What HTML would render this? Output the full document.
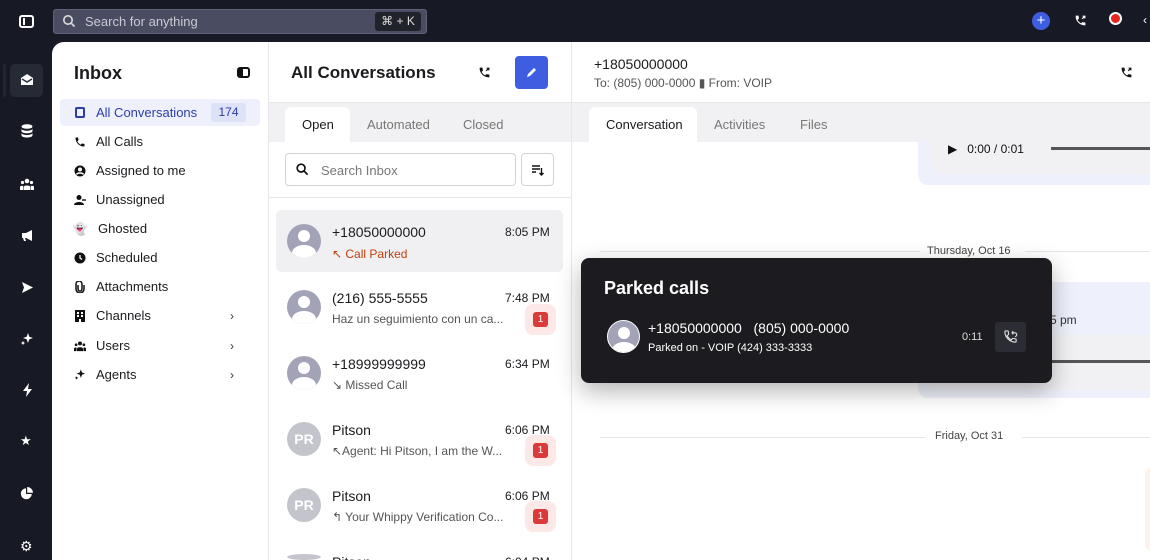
<!DOCTYPE html>
<html><head><meta charset="utf-8"><style>
*{box-sizing:border-box;margin:0;padding:0}
html{width:1150px;height:560px;overflow:hidden}
body{width:1150px;height:560px;overflow:hidden;background:#171a24;font-family:"Liberation Sans",sans-serif;position:relative;color:#1b1b1f}
.a{position:absolute}
svg{display:block}
.nav{position:absolute;left:74px;font-size:13px;color:#1b1b1f;display:flex;align-items:center}
.nav .ic{width:12px;height:12px;margin-right:10px;display:flex;align-items:center;justify-content:center}
.chev{position:absolute;left:230px;font-size:12px;color:#333}
.av{position:absolute;left:287px;width:34px;height:34px;border-radius:50%;background:#a3a3b8;overflow:hidden}
.av.pr{background:#c4c4cc;color:#fff;font-weight:bold;font-size:14px;text-align:center;line-height:34px}
.nm{position:absolute;left:332px;font-size:14px;color:#1b1b1f}
.tm{position:absolute;left:505px;font-size:12px;color:#1b1b1f}
.sb{position:absolute;left:332px;font-size:12px;color:#555}
.bd{position:absolute;left:525px;width:31px;height:31px;border-radius:8px;background:#fde8e8}
.bd span{position:absolute;left:8px;top:8px;width:15px;height:15px;border-radius:3px;background:#d93a3a;color:#fff;font-size:10px;text-align:center;line-height:15px}
</style></head><body>
<!-- top bar -->
<div class="a" style="left:19px;top:15px;width:15px;height:13px;border:2px solid #fff;border-radius:3px"><div style="position:absolute;left:2px;top:1px;width:2px;height:7px;background:#fff"></div></div>
<div class="a" style="left:53px;top:9px;width:374px;height:25px;background:#4a4c62;border:1px solid #5e6178;border-radius:3px"></div>
<svg class="a" style="left:62px;top:14px" width="14" height="14" viewBox="0 0 14 14"><circle cx="6" cy="6" r="4.2" fill="none" stroke="#ddd" stroke-width="1.6"/><path d="M9 9l3.5 3.5" stroke="#ddd" stroke-width="1.6"/></svg>
<div class="a" style="left:85px;top:14px;font-size:13px;color:#c9cad4">Search for anything</div>
<div class="a" style="left:375px;top:12px;width:46px;height:19px;background:#20222c;border-radius:3px;color:#ddd;font-size:12px;line-height:19px;text-align:center">⌘ + K</div>
<div class="a" style="left:1032px;top:12px;width:18px;height:18px;border-radius:50%;background:#3f5de0;color:#fff;font-size:15px;line-height:17px;text-align:center">+</div>
<svg class="a" style="left:1074px;top:14px" width="13" height="13" viewBox="0 0 24 24"><path d="M6.6 10.8c1.4 2.8 3.8 5.1 6.6 6.6l2.2-2.2c.3-.3.7-.4 1-.2 1.1.4 2.3.6 3.6.6.6 0 1 .4 1 1V20c0 .6-.4 1-1 1C10.6 21 3 13.4 3 4c0-.6.4-1 1-1h3.5c.6 0 1 .4 1 1 0 1.3.2 2.5.6 3.6.1.3 0 .7-.2 1z" fill="#fff"/><path d="M15 9l5-5M16 4h4v4" stroke="#fff" stroke-width="2.2" fill="none"/></svg>
<div class="a" style="left:1109px;top:12px;width:13px;height:13px;border-radius:50%;background:#e8261c;border:2px solid #fff"></div>
<div class="a" style="left:1143px;top:13px;color:#fff;font-size:12px">‹</div>
<!-- rail -->
<div class="a" style="left:3px;top:64px;width:3px;height:33px;background:#23262f;border-radius:2px"></div>
<div class="a" style="left:10px;top:64px;width:33px;height:33px;background:#262a35;border-radius:5px"></div>
<svg class="a" style="left:20px;top:74px" width="14" height="12" viewBox="0 0 14 12"><path d="M1 4L7 0l6 4v7H1z" fill="#fff"/><path d="M2 5l5 3 5-3" stroke="#262a35" stroke-width="1.4" fill="none"/></svg>
<svg class="a" style="left:21px;top:124px" width="12" height="14" viewBox="0 0 12 14"><ellipse cx="6" cy="2.5" rx="5.5" ry="2.3" fill="#fff"/><path d="M.5 4.5c0 3 11 3 11 0v2.5c0 3-11 3-11 0zM.5 8.8c0 3 11 3 11 0v2.5c0 3-11 3-11 0z" fill="#fff"/></svg>
<svg class="a" style="left:20px;top:178px" width="14" height="12" viewBox="0 0 14 12"><circle cx="7" cy="3" r="2.3" fill="#fff"/><circle cx="2.5" cy="4.5" r="1.6" fill="#fff"/><circle cx="11.5" cy="4.5" r="1.6" fill="#fff"/><path d="M3.5 12v-3c0-2 7-2 7 0v3zM0 12V9c0-1.5 2.5-1.5 3-1v4zM14 12V9c0-1.5-2.5-1.5-3-1v4z" fill="#fff"/></svg>
<svg class="a" style="left:21px;top:229px" width="13" height="13" viewBox="0 0 13 13"><path d="M1 4h4l6-3v11l-6-3H4l1 3H3L2 9H1z" fill="#fff"/></svg>
<svg class="a" style="left:21px;top:281px" width="13" height="13" viewBox="0 0 13 13"><path d="M1 1l11 5.5L1 12l2-5.5z" fill="#fff"/></svg>
<svg class="a" style="left:20px;top:332px" width="14" height="14" viewBox="0 0 14 14"><path d="M8 1l1.3 3.7L13 6l-3.7 1.3L8 11 6.7 7.3 3 6l3.7-1.3zM3 9l.7 1.3L5 11l-1.3.7L3 13l-.7-1.3L1 11l1.3-.7z" fill="#fff"/></svg>
<svg class="a" style="left:22px;top:383px" width="11" height="14" viewBox="0 0 11 14"><path d="M7 0L1 8h4l-1 6 6-8H6z" fill="#fff"/></svg>
<div class="a" style="left:20px;top:433px;color:#fff;font-size:13px">★</div>
<svg class="a" style="left:20px;top:487px" width="13" height="13" viewBox="0 0 13 13"><path d="M6 1.2A5.5 5.5 0 1 0 11.8 7H6z" fill="#fff"/><path d="M7.2 0v5.8H13A6 6 0 0 0 7.2 0z" fill="#fff"/></svg>
<div class="a" style="left:20px;top:538px;color:#fff;font-size:14px">⚙</div>
<!-- main panel -->
<div class="a" style="left:52px;top:42px;width:1098px;height:518px;background:#fff;border-radius:12px 0 0 0;overflow:hidden">
</div>
<div class="a" style="left:268px;top:42px;width:1px;height:518px;background:#e5e5ea"></div>
<div class="a" style="left:571px;top:42px;width:1px;height:518px;background:#e5e5ea"></div>
<!-- inbox sidebar -->
<div class="a" style="left:74px;top:63px;font-size:18px;font-weight:bold">Inbox</div>
<div class="a" style="left:237px;top:67px;width:13px;height:11px;border:2px solid #111;border-radius:3px"><div style="width:4px;height:7px;background:#111"></div></div>
<div class="a" style="left:60px;top:99px;width:200px;height:27px;background:#eef0fb;border-radius:4px"></div>
<div class="a" style="left:211px;top:103px;width:35px;height:19px;background:#dde2f8;border-radius:3px;color:#2c3e9c;font-size:12px;line-height:19px;text-align:center">174</div>
<div class="nav" style="top:105px;color:#2c3ea8"><span class="ic"><span style="width:10px;height:11px;border:2px solid #2c3ea8;border-radius:2px"></span></span>All Conversations</div>
<div class="nav" style="top:134px"><span class="ic"><svg width="12" height="12" viewBox="0 0 24 24"><path d="M6.6 10.8c1.4 2.8 3.8 5.1 6.6 6.6l2.2-2.2c.3-.3.7-.4 1-.2 1.1.4 2.3.6 3.6.6.6 0 1 .4 1 1V20c0 .6-.4 1-1 1C10.6 21 3 13.4 3 4c0-.6.4-1 1-1h3.5c.6 0 1 .4 1 1 0 1.3.2 2.5.6 3.6.1.3 0 .7-.2 1z" fill="#111"/></svg></span>All Calls</div>
<div class="nav" style="top:163px"><span class="ic"><svg width="12" height="12" viewBox="0 0 12 12"><circle cx="6" cy="6" r="5.5" fill="#111"/><circle cx="6" cy="4.5" r="2" fill="#fff"/><path d="M2.5 9.5c1-2 6-2 7 0" stroke="#fff" stroke-width="1.4" fill="none"/></svg></span>Assigned to me</div>
<div class="nav" style="top:192px"><span class="ic"><svg width="12" height="12" viewBox="0 0 12 12"><circle cx="5" cy="3.5" r="2.5" fill="#111"/><path d="M0 11c0-4 10-4 10 0z" fill="#111"/><path d="M8 6h4" stroke="#111" stroke-width="1.4"/></svg></span>Unassigned</div>
<div class="nav" style="top:221px"><span class="ic" style="font-size:12px;margin-right:12px">👻</span>Ghosted</div>
<div class="nav" style="top:250px"><span class="ic"><svg width="12" height="12" viewBox="0 0 12 12"><circle cx="6" cy="6" r="5.5" fill="#111"/><path d="M6 3v3l2 1.5" stroke="#fff" stroke-width="1.3" fill="none"/></svg></span>Scheduled</div>
<div class="nav" style="top:279px"><span class="ic"><svg width="10" height="12" viewBox="0 0 10 12"><path d="M3 4v4a2 2 0 0 0 4 0V3a3 3 0 0 0-6 0v5a4 4 0 0 0 8 0V4" stroke="#111" stroke-width="1.5" fill="none"/></svg></span>Attachments</div>
<div class="nav" style="top:308px"><span class="ic"><svg width="10" height="12" viewBox="0 0 10 12"><path d="M0 0h10v12H6V9H4v3H0z" fill="#111"/><rect x="2" y="2" width="2" height="2" fill="#fff"/><rect x="6" y="2" width="2" height="2" fill="#fff"/><rect x="2" y="5" width="2" height="2" fill="#fff"/><rect x="6" y="5" width="2" height="2" fill="#fff"/></svg></span>Channels</div><div class="chev" style="top:309px">›</div>
<div class="nav" style="top:338px"><span class="ic"><svg width="14" height="12" viewBox="0 0 14 12"><circle cx="7" cy="3" r="2.3" fill="#111"/><circle cx="2.5" cy="4.5" r="1.6" fill="#111"/><circle cx="11.5" cy="4.5" r="1.6" fill="#111"/><path d="M3.5 12v-3c0-2 7-2 7 0v3zM0 12V9c0-1.5 2.5-1.5 3-1v4zM14 12V9c0-1.5-2.5-1.5-3-1v4z" fill="#111"/></svg></span>Users</div><div class="chev" style="top:339px">›</div>
<div class="nav" style="top:367px"><span class="ic"><svg width="13" height="13" viewBox="0 0 14 14"><path d="M8 1l1.3 3.7L13 6l-3.7 1.3L8 11 6.7 7.3 3 6l3.7-1.3zM3 9l.7 1.3L5 11l-1.3.7L3 13l-.7-1.3L1 11l1.3-.7z" fill="#111"/></svg></span>Agents</div><div class="chev" style="top:368px">›</div>
<!-- conversations column -->
<div class="a" style="left:291px;top:63px;font-size:17px;font-weight:bold">All Conversations</div>
<svg class="a" style="left:478px;top:66px" width="13" height="13" viewBox="0 0 24 24"><path d="M6.6 10.8c1.4 2.8 3.8 5.1 6.6 6.6l2.2-2.2c.3-.3.7-.4 1-.2 1.1.4 2.3.6 3.6.6.6 0 1 .4 1 1V20c0 .6-.4 1-1 1C10.6 21 3 13.4 3 4c0-.6.4-1 1-1h3.5c.6 0 1 .4 1 1 0 1.3.2 2.5.6 3.6.1.3 0 .7-.2 1z" fill="#111"/><path d="M15 9l5-5M16 4h4v4" stroke="#111" stroke-width="2.2" fill="none"/></svg>
<div class="a" style="left:515px;top:56px;width:33px;height:33px;background:#3f5de0;border-radius:4px"><svg style="margin:10px" width="13" height="13" viewBox="0 0 13 13"><path d="M2 11l1-3 6-6 2 2-6 6z" fill="#fff"/></svg></div>
<div class="a" style="left:269px;top:102px;width:302px;height:40px;background:#f1f1f3;border-top:1px solid #e5e5ea"></div>
<div class="a" style="left:285px;top:107px;width:65px;height:36px;background:#fff;border-radius:6px 6px 0 0"></div>
<div class="a" style="left:302px;top:117px;font-size:13px">Open</div>
<div class="a" style="left:367px;top:117px;font-size:13px;color:#777">Automated</div>
<div class="a" style="left:463px;top:117px;font-size:13px;color:#777">Closed</div>
<div class="a" style="left:285px;top:153px;width:231px;height:33px;border:1px solid #d2d2d8;border-radius:4px"></div>
<svg class="a" style="left:296px;top:163px" width="13" height="13" viewBox="0 0 14 14"><circle cx="5.5" cy="5.5" r="4.2" fill="none" stroke="#111" stroke-width="1.8"/><path d="M8.5 8.5l4 4" stroke="#111" stroke-width="1.8"/></svg>
<div class="a" style="left:321px;top:163px;font-size:13px;color:#777">Search Inbox</div>
<div class="a" style="left:521px;top:153px;width:33px;height:33px;border:1px solid #d2d2d8;border-radius:4px"><svg style="margin:10px 10px" width="12" height="12" viewBox="0 0 12 12"><path d="M0 2h8M0 5h8M0 8h4" stroke="#111" stroke-width="1.5"/><path d="M9.5 4v7M7.5 9l2 2 2-2" stroke="#111" stroke-width="1.4" fill="none"/></svg></div>
<div class="a" style="left:269px;top:197px;width:302px;height:1px;background:#e5e5ea"></div>
<div class="a" style="left:276px;top:210px;width:287px;height:62px;background:#f0f0f2;border-radius:6px"></div>

<div class="av" style="top:224px"><div style="position:absolute;left:11px;top:6px;width:12px;height:12px;border-radius:50%;background:#fff"></div><div style="position:absolute;left:5px;top:21px;width:24px;height:16px;border-radius:50%;background:#fff"></div></div>
<div class="nm" style="top:224px">+18050000000</div><div class="tm" style="top:225px">8:05 PM</div>
<div class="sb" style="top:247px;color:#c2410c">↖ Call Parked</div>

<div class="av" style="top:290px"><div style="position:absolute;left:11px;top:6px;width:12px;height:12px;border-radius:50%;background:#fff"></div><div style="position:absolute;left:5px;top:21px;width:24px;height:16px;border-radius:50%;background:#fff"></div></div>
<div class="nm" style="top:290px">(216) 555-5555</div><div class="tm" style="top:291px">7:48 PM</div>
<div class="sb" style="top:312px">Haz un seguimiento con un ca...</div><div class="bd" style="top:304px"><span>1</span></div>

<div class="av" style="top:356px"><div style="position:absolute;left:11px;top:6px;width:12px;height:12px;border-radius:50%;background:#fff"></div><div style="position:absolute;left:5px;top:21px;width:24px;height:16px;border-radius:50%;background:#fff"></div></div>
<div class="nm" style="top:356px">+18999999999</div><div class="tm" style="top:357px">6:34 PM</div>
<div class="sb" style="top:378px">↘ Missed Call</div>

<div class="av pr" style="top:422px">PR</div>
<div class="nm" style="top:422px">Pitson</div><div class="tm" style="top:423px">6:06 PM</div>
<div class="sb" style="top:444px">↖Agent: Hi Pitson, I am the W...</div><div class="bd" style="top:435px"><span>1</span></div>

<div class="av pr" style="top:488px">PR</div>
<div class="nm" style="top:488px">Pitson</div><div class="tm" style="top:489px">6:06 PM</div>
<div class="sb" style="top:510px">↰ Your Whippy Verification Co...</div><div class="bd" style="top:501px"><span>1</span></div>

<div class="av pr" style="top:554px;height:6px"></div>
<div class="nm" style="top:554px;height:6px;overflow:hidden">Pitson</div><div class="tm" style="top:555px;height:5px;overflow:hidden">6:04 PM</div>
<!-- right pane -->
<div class="a" style="left:594px;top:56px;font-size:14px">+18050000000</div>
<div class="a" style="left:594px;top:76px;font-size:12px;color:#555">To: (805) 000-0000 ▮ From: VOIP</div>
<svg class="a" style="left:1120px;top:66px" width="13" height="13" viewBox="0 0 24 24"><path d="M6.6 10.8c1.4 2.8 3.8 5.1 6.6 6.6l2.2-2.2c.3-.3.7-.4 1-.2 1.1.4 2.3.6 3.6.6.6 0 1 .4 1 1V20c0 .6-.4 1-1 1C10.6 21 3 13.4 3 4c0-.6.4-1 1-1h3.5c.6 0 1 .4 1 1 0 1.3.2 2.5.6 3.6.1.3 0 .7-.2 1z" fill="#111"/><path d="M15 9l5-5M16 4h4v4" stroke="#111" stroke-width="2.2" fill="none"/></svg>
<div class="a" style="left:572px;top:102px;width:578px;height:40px;background:#f1f1f3;border-top:1px solid #e5e5ea"></div>
<div class="a" style="left:589px;top:107px;width:108px;height:36px;background:#fff;border-radius:6px 6px 0 0"></div>
<div class="a" style="left:606px;top:117px;font-size:13px">Conversation</div>
<div class="a" style="left:714px;top:117px;font-size:13px;color:#777">Activities</div>
<div class="a" style="left:800px;top:117px;font-size:13px;color:#777">Files</div>
<div class="a" style="left:918px;top:142px;width:232px;height:43px;background:#eef0fb;border-radius:0 0 0 10px"></div>
<div class="a" style="left:930px;top:142px;width:220px;height:32px;background:#f1f1f3;border-radius:0 0 0 14px"></div>
<div class="a" style="left:948px;top:142px;font-size:12px;color:#111">▶&nbsp;&nbsp; 0:00 / 0:01</div>
<div class="a" style="left:1051px;top:147px;width:99px;height:3px;background:#555"></div>
<div class="a" style="left:600px;top:251px;width:320px;height:1px;background:#e5e5ea"></div>
<div class="a" style="left:1025px;top:251px;width:125px;height:1px;background:#e5e5ea"></div>
<div class="a" style="left:927px;top:245px;font-size:11px;color:#444">Thursday, Oct 16</div>
<div class="a" style="left:918px;top:282px;width:232px;height:116px;background:#eef0fb;border-radius:10px 0 0 10px"></div>
<div class="a" style="left:930px;top:335px;width:220px;height:55px;background:#f1f1f3"></div>
<div class="a" style="left:1050px;top:360px;width:100px;height:3px;background:#555"></div>
<div class="a" style="left:1050px;top:313px;font-size:12px;color:#333">5 pm</div>
<div class="a" style="left:600px;top:437px;width:325px;height:1px;background:#e5e5ea"></div>
<div class="a" style="left:1022px;top:437px;width:128px;height:1px;background:#e5e5ea"></div>
<div class="a" style="left:935px;top:430px;font-size:11px;color:#444">Friday, Oct 31</div>
<div class="a" style="left:1145px;top:468px;width:5px;height:82px;background:#fdf3ee;border-radius:8px 0 0 8px"></div>
<!-- popup -->
<div class="a" style="left:581px;top:258px;width:471px;height:125px;background:#1c1c20;border-radius:8px;box-shadow:0 8px 24px rgba(0,0,0,.3)"></div>
<div class="a" style="left:604px;top:278px;font-size:18px;font-weight:bold;color:#fff">Parked calls</div>
<div class="a" style="left:607px;top:320px;width:33px;height:33px;border-radius:50%;background:#a3a3b8;border:1px solid #fff;overflow:hidden"><div style="position:absolute;left:10px;top:6px;width:12px;height:12px;border-radius:50%;background:#fff"></div><div style="position:absolute;left:4px;top:21px;width:24px;height:16px;border-radius:50%;background:#fff"></div></div>
<div class="a" style="left:648px;top:320px;font-size:14px;color:#fff">+18050000000 &nbsp;&nbsp;(805) 000-0000</div>
<div class="a" style="left:648px;top:342px;font-size:11px;color:#fff">Parked on - VOIP (424) 333-3333</div>
<div class="a" style="left:962px;top:331px;font-size:11px;color:#ddd">0:11</div>
<div class="a" style="left:995px;top:322px;width:31px;height:30px;background:#2c2d34;border-radius:3px"><svg style="margin:7px 8px" width="15" height="15" viewBox="0 0 24 24"><path d="M6.6 10.8c1.4 2.8 3.8 5.1 6.6 6.6l2.2-2.2c.3-.3.7-.4 1-.2 1.1.4 2.3.6 3.6.6.6 0 1 .4 1 1V20c0 .6-.4 1-1 1C10.6 21 3 13.4 3 4c0-.6.4-1 1-1h3.5c.6 0 1 .4 1 1 0 1.3.2 2.5.6 3.6.1.3 0 .7-.2 1z" fill="none" stroke="#ddd" stroke-width="1.8"/><path d="M14 6h5a3 3 0 0 1 0 6M14 6l2.5-2.5M14 6l2.5 2.5" stroke="#ddd" stroke-width="1.8" fill="none"/></svg></div>
</body></html>
